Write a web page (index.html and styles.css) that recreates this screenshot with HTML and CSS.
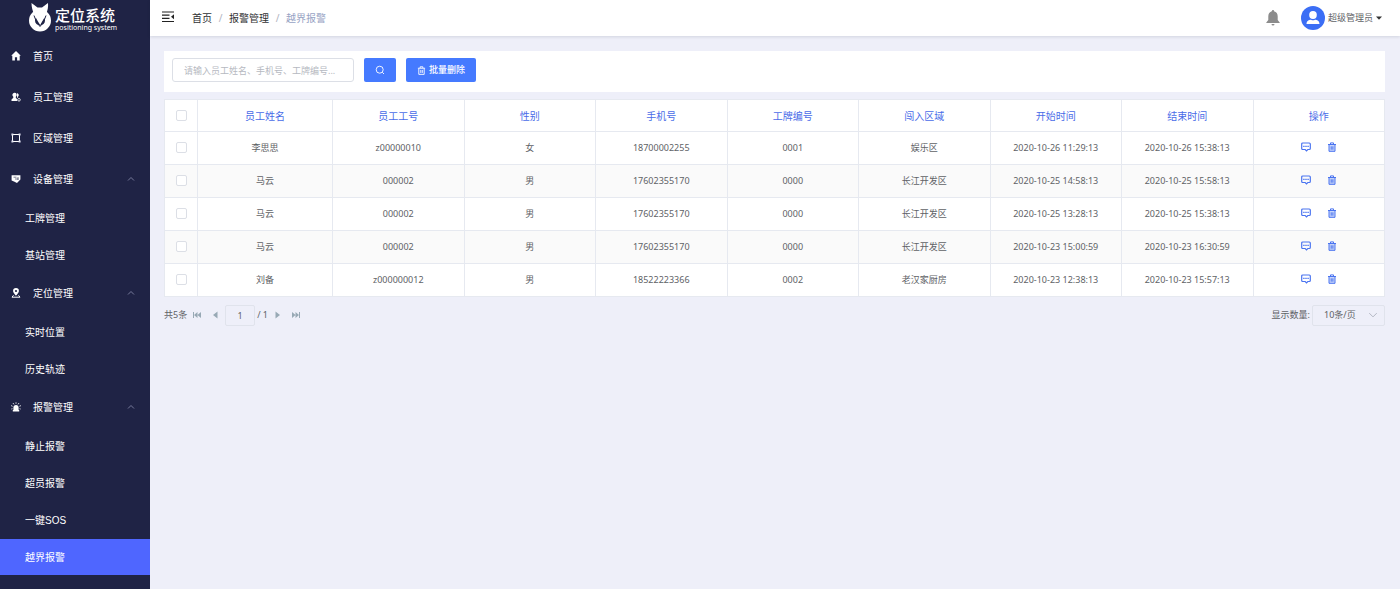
FILE: index.html
```html
<!DOCTYPE html>
<html lang="zh-CN">
<head>
<meta charset="utf-8">
<meta name="viewport" content="width=device-width, initial-scale=1">
<title>定位系统 - 越界报警</title>
<link rel="stylesheet" href="styles.css">
</head>
<body>
<svg class="sprite" aria-hidden="true">
  <symbol id="comment" viewBox="0 0 10 10"><path d="M1.700 1h6.600a1 1 0 0 1 1 1v4.500a1 1 0 0 1-1 1H6.800L5.500 8.900 4.200 7.500H1.700a1 1 0 0 1-1-1V2a1 1 0 0 1 1-1z" fill="none" stroke="currentColor" stroke-width="1.200"/><path d="M2.200 3.700h1.400V5H2.200zM4.300 3.700h1.400V5H4.300zM6.400 3.700h1.400V5H6.400z" fill="currentColor"/></symbol>
  <symbol id="trash" viewBox="0 0 10 10"><path d="M1 2.500h8M3.500 2.200V.9h3v1.300M2 2.800v6.500h6V2.800M4.200 4.300v3.400M5.900 4.300v3.400" fill="none" stroke="currentColor"/></symbol>
  <symbol id="trash-filled" viewBox="0 0 10 10"><path d="M2 2.800h6v6.500H2z" fill="currentColor" opacity=".3"/><path d="M1 2.500h8M3.500 2.200V.9h3v1.300M2 2.800v6.500h6V2.800M4.200 4.300v3.400M5.900 4.300v3.400" fill="none" stroke="currentColor"/></symbol>
  <symbol id="chevron" viewBox="0 0 8 8"><path d="M1 5.500 4 2.500 7 5.500" fill="none" stroke="currentColor" stroke-width=".8"/></symbol>
</svg>
<div class="app">
  <aside class="sidebar">
    <a class="brand" href="#">
      <svg class="brand-mark" viewBox="0 0 24 30" aria-hidden="true"><circle cx="12" cy="17.500" r="8" fill="none" stroke="#fff" stroke-width="6"/><path d="M3.500 0 9.500 4.500h4.500L20 0c.8 8-3 14-7.800 22C7.500 14.500 3.500 8 3.500 0z" fill="#fff"/><path d="M6 12.500c1.500 4.500 3.500 8 6 11 2.500-3 4.500-6.500 6-11" fill="none" stroke="#1f2345" stroke-width="1"/></svg>
      <span class="brand-text"><strong class="brand-name">定位系统</strong><span class="brand-sub">positioning system</span></span>
    </a>
    <nav>
      <ul class="menu">
        <li><a class="menu-item" href="#"><svg class="menu-icon" viewBox="0 0 10 10"><path d="M5 0 9.800 4.800H8.700V9.500H6.100V6.300H3.900v3.200H1.300V4.800H.2z" fill="#fff"/></svg>首页</a></li>
        <li><a class="menu-item" href="#"><svg class="menu-icon" viewBox="0 0 10 10"><path d="M3.500.8a2 2.200 0 0 1 1.300 4v1l1.400 1.400V9H.5V7.500L2.300 5.800v-1A2.200 2.200 0 0 1 3.500.8zM5.800 1.200c2 0 2.500 2.300 1.200 3.600v.8L6.200 6z" fill="#fff"/><circle cx="8" cy="7.800" r="1.300" fill="none" stroke="#fff" stroke-width=".8"/></svg>员工管理</a></li>
        <li><a class="menu-item" href="#"><svg class="menu-icon" viewBox="0 0 10 10"><path d="M1.500 1.500h7v7h-7z" fill="none" stroke="#fff"/><path d="M.4.4h2v2h-2zM7.600.4h2v2h-2zM.4 7.600h2v2h-2zM7.600 7.600h2v2h-2z" fill="#dfe2f0"/></svg>区域管理</a></li>
        <li>
          <button class="menu-item" type="button" aria-expanded="true"><svg class="menu-icon" viewBox="0 0 10 10"><path d="M.6 1.200h8.800v4.300L6 9 3 7.600.6 6.600z" fill="#fff"/><path d="M2.500 3.200h3M4 5h3.500M7 3v3" stroke="#1f2345" stroke-width=".6"/></svg>设备管理<svg class="menu-arrow"><use href="#chevron"/></svg></button>
          <ul class="submenu"><li><a class="sub-item" href="#">工牌管理</a></li><li><a class="sub-item" href="#">基站管理</a></li></ul>
        </li>
        <li>
          <button class="menu-item" type="button" aria-expanded="true"><svg class="menu-icon" viewBox="0 0 10 10"><path d="M5 0a2.900 2.900 0 0 1 2.900 3.100C7.900 5 5 7.700 5 7.700S2.100 5 2.100 3.100A2.900 2.900 0 0 1 5 0zm0 1.900a1.100 1.100 0 1 0 0 2.200 1.100 1.100 0 0 0 0-2.200z" fill="#fff" fill-rule="evenodd"/><path d="M2.500 7.300 1 9.200h8L7.500 7.300" fill="none" stroke="#fff"/></svg>定位管理<svg class="menu-arrow"><use href="#chevron"/></svg></button>
          <ul class="submenu"><li><a class="sub-item" href="#">实时位置</a></li><li><a class="sub-item" href="#">历史轨迹</a></li></ul>
        </li>
        <li>
          <button class="menu-item" type="button" aria-expanded="true"><svg class="menu-icon" viewBox="0 0 10 10"><path d="M2.400 8V5.500a2.600 2.600 0 0 1 5.200 0V8h.6v1.600H1.800V8z" fill="#fff"/><path d="M5 .3v1.500M2 1l.9 1.400M8 1l-.9 1.400M0 3.600l1.600.7M10 3.600l-1.600.7M.3 7l1.200-.3M9.700 7l-1.200-.3" stroke="#fff" stroke-width=".8"/></svg>报警管理<svg class="menu-arrow"><use href="#chevron"/></svg></button>
          <ul class="submenu"><li><a class="sub-item" href="#">静止报警</a></li><li><a class="sub-item" href="#">超员报警</a></li><li><a class="sub-item" href="#">一键SOS</a></li><li><a class="sub-item active" href="#" aria-current="page">越界报警</a></li></ul>
        </li>
      </ul>
    </nav>
  </aside>
  <div class="page">
    <header class="topbar">
      <button class="fold" type="button" aria-label="收起菜单"><svg viewBox="0 0 12 12"><path d="M0 1h12M0 4.200h7.500M0 7.400h7.500M0 10.500h12" stroke="#222" stroke-width="1.200"/><path d="M12 3.200v5L9 5.700z" fill="#222"/></svg></button>
      <nav class="crumbs" aria-label="路径"><a href="#">首页</a><i>/</i><a href="#">报警管理</a><i>/</i><span>越界报警</span></nav>
      <button class="bell" type="button" aria-label="通知"><svg viewBox="0 0 14 16"><path d="M7 0a1 1 0 0 1 1 1.200c2.500.5 3.700 2.500 3.700 5V10l2 2.500v.5H.3v-.5l2-2.500V6.200c0-2.500 1.200-4.500 3.700-5A1 1 0 0 1 7 0zM5.500 14h3a1.500 1.500 0 0 1-3 0z" fill="#8c8c8c"/></svg></button>
      <button class="user" type="button"><svg class="avatar" viewBox="0 0 24 24"><circle cx="12" cy="12" r="12" fill="#3b6ef5"/><ellipse cx="12" cy="9" rx="3.800" ry="4" fill="#fff"/><path d="M5.500 18c0-3 2.500-4.300 4.500-4.300q2 1.200 4 0c2 0 4.500 1.300 4.500 4.300z" fill="#fff"/></svg>超级管理员<svg class="caret" viewBox="0 0 6 4"><path d="M0 .5h6L3 3.700z" fill="#333"/></svg></button>
    </header>
    <main class="content">
      <form class="toolbar">
        <input class="search" type="text" aria-label="搜索" placeholder="请输入员工姓名、手机号、工牌编号...">
        <button class="btn btn-icon" type="button" aria-label="查询"><svg viewBox="0 0 10 10"><circle cx="4.700" cy="4.700" r="3.500" fill="none" stroke="#fff" stroke-width=".9"/><path d="M7.300 7.300 9 9" stroke="#fff" stroke-width=".9"/></svg></button>
        <button class="btn" type="button"><svg class="btn-trash"><use href="#trash"/></svg>批量删除</button>
      </form>
      <table class="grid">
        <colgroup><col class="col-check"><col class="col-name"><col span="8"></colgroup>
        <thead><tr><th><input type="checkbox" aria-label="全选"></th><th>员工姓名</th><th>员工工号</th><th>性别</th><th>手机号</th><th>工牌编号</th><th>闯入区域</th><th>开始时间</th><th>结束时间</th><th>操作</th></tr></thead>
        <tbody>
          <tr><td><input type="checkbox" aria-label="选择"></td><td>李思思</td><td>z00000010</td><td>女</td><td>18700002255</td><td>0001</td><td>娱乐区</td><td>2020-10-26 11:29:13</td><td>2020-10-26 15:38:13</td><td><div class="ops"><button type="button" aria-label="详情"><svg><use href="#comment"/></svg></button><button type="button" aria-label="删除"><svg><use href="#trash-filled"/></svg></button></div></td></tr>
          <tr><td><input type="checkbox" aria-label="选择"></td><td>马云</td><td>000002</td><td>男</td><td>17602355170</td><td>0000</td><td>长江开发区</td><td>2020-10-25 14:58:13</td><td>2020-10-25 15:58:13</td><td><div class="ops"><button type="button" aria-label="详情"><svg><use href="#comment"/></svg></button><button type="button" aria-label="删除"><svg><use href="#trash-filled"/></svg></button></div></td></tr>
          <tr><td><input type="checkbox" aria-label="选择"></td><td>马云</td><td>000002</td><td>男</td><td>17602355170</td><td>0000</td><td>长江开发区</td><td>2020-10-25 13:28:13</td><td>2020-10-25 15:38:13</td><td><div class="ops"><button type="button" aria-label="详情"><svg><use href="#comment"/></svg></button><button type="button" aria-label="删除"><svg><use href="#trash-filled"/></svg></button></div></td></tr>
          <tr><td><input type="checkbox" aria-label="选择"></td><td>马云</td><td>000002</td><td>男</td><td>17602355170</td><td>0000</td><td>长江开发区</td><td>2020-10-23 15:00:59</td><td>2020-10-23 16:30:59</td><td><div class="ops"><button type="button" aria-label="详情"><svg><use href="#comment"/></svg></button><button type="button" aria-label="删除"><svg><use href="#trash-filled"/></svg></button></div></td></tr>
          <tr><td><input type="checkbox" aria-label="选择"></td><td>刘备</td><td>z000000012</td><td>男</td><td>18522223366</td><td>0002</td><td>老汉家厨房</td><td>2020-10-23 12:38:13</td><td>2020-10-23 15:57:13</td><td><div class="ops"><button type="button" aria-label="详情"><svg><use href="#comment"/></svg></button><button type="button" aria-label="删除"><svg><use href="#trash-filled"/></svg></button></div></td></tr>
        </tbody>
      </table>
      <div class="pager">
        <span>共5条</span>
        <button type="button" aria-label="首页"><svg viewBox="0 0 8 8"><path d="M0 1h1v6H0zM4.500 1v6L1 4zM8 1v6L4.500 4z"/></svg></button>
        <button type="button" aria-label="上一页"><svg viewBox="0 0 8 8"><path d="M6.500.5v7L2 4z"/></svg></button>
        <input class="page-no" type="text" value="1" aria-label="页码">
        <span class="total">/ 1</span>
        <button type="button" aria-label="下一页"><svg viewBox="0 0 8 8"><path d="M1.500.5v7L6 4z"/></svg></button>
        <button type="button" aria-label="末页"><svg viewBox="0 0 8 8"><path d="M7 1h1v6H7zM3.500 1v6L7 4zM0 1v6L3.500 4z"/></svg></button>
        <label class="size-label" for="size">显示数量:</label>
        <span class="size"><select id="size"><option>10条/页</option><option>20条/页</option></select><svg><use href="#chevron"/></svg></span>
      </div>
    </main>
  </div>
</div>
</body>
</html>
```
FILE: styles.css
```css
* { box-sizing: border-box; }

body {
  margin: 0;
  font: 9px/16px "Noto Sans", "Noto Sans CJK SC", sans-serif;
  color: #606266;
  background: #eeeff9;
}

button, input, select { font: inherit; color: inherit; margin: 0; }
button { padding: 0; border: 0; background: none; cursor: pointer; }
a { color: inherit; text-decoration: none; }
ul { margin: 0; padding: 0; list-style: none; }
svg { display: block; width: 10px; height: 10px; flex: none; }
.sprite { position: absolute; width: 0; height: 0; }

.app { display: flex; min-height: 100vh; }

.sidebar {
  flex: none;
  width: 150px;
  background: #1f2345;
  color: #fff;
  font: 10px/16px "Liberation Sans", "Noto Sans CJK SC", sans-serif;
}
.brand { display: flex; gap: 3px; height: 36px; padding: 3px 0 0 28px; }
.brand-mark { width: 24px; height: 30px; }
.brand-text { display: flex; flex-direction: column; padding-top: 3px; }
.brand-name { font: 500 15px/18px "Noto Sans CJK SC", sans-serif; }
.brand-sub { font: 7px/8px "Noto Sans", sans-serif; white-space: nowrap; }

.menu-item {
  display: flex;
  align-items: center;
  width: 100%;
  height: 41px;
  padding: 1px 15px 0 11px;
  text-align: left;
}
.menu-icon { margin: 0 12px 2px 0; }
.menu-arrow { width: 8px; height: 8px; margin: 0 0 2px auto; color: #8b8fae; }
.submenu { display: grid; gap: 1px; }
.sub-item { display: flex; align-items: center; height: 36px; padding: 2px 0 0 25px; }
.active { background: #4f66ff; }

.page { flex: 1; min-width: 0; }
.topbar {
  display: flex;
  align-items: center;
  height: 36px;
  padding: 0 18px 0 12px;
  background: #fff;
  box-shadow: 0 1px 3px rgba(0, 21, 41, .12);
}
.fold { padding-bottom: 2px; }
.fold svg { width: 12px; height: 12px; }
.crumbs { display: flex; margin-left: 18px; font-size: 10px; color: #303133; }
.crumbs i { width: 17px; text-align: center; font-style: normal; color: #b0b4c0; }
.crumbs span { color: #97a3c4; }
.bell { margin-left: auto; }
.bell svg { width: 14px; height: 16px; }
.user { display: flex; align-items: center; margin-left: 21px; }
.avatar { width: 24px; height: 24px; margin-right: 3px; }
.caret { width: 6px; height: 4px; margin-left: 3px; }

.content { padding: 15px 15px 0 14px; }
.toolbar {
  display: flex;
  align-items: center;
  gap: 10px;
  height: 41px;
  padding: 0 8px 3px;
  background: #fff;
}
.search {
  width: 182px;
  height: 24px;
  padding: 0 11px;
  border: 1px solid #dcdfe6;
  border-radius: 3px;
  background: #fff;
}
.search::placeholder { color: #b6b9c1; opacity: 1; }
.btn {
  display: flex;
  align-items: center;
  justify-content: center;
  gap: 3px;
  height: 24px;
  padding: 0 11px;
  border-radius: 2px;
  background: #457aff;
  color: #fff;
  font-weight: 500;
}
.btn-trash { width: 9px; height: 9px; }

.grid {
  width: 100%;
  margin-top: 7px;
  table-layout: fixed;
  border-collapse: collapse;
  background: #fff;
}
.col-check { width: 33px; }
.col-name { width: 135px; }
.grid th, .grid td { height: 33px; padding: 0 0 1px; border: 1px solid #e6e9f0; text-align: center; }
.grid th { height: 32px; padding: 0; font-size: 10px; font-weight: 400; color: #4a6ce8; }
.grid tbody tr:nth-child(even) { background: #fafafa; }
.grid input {
  display: block;
  appearance: none;
  width: 11px;
  height: 11px;
  margin: 0 auto;
  border: 1px solid #dcdfe6;
  border-radius: 2px;
  background: #fff;
}
.ops { display: flex; justify-content: center; gap: 16px; padding-bottom: 2px; color: #4a74f0; }

.pager { display: flex; align-items: center; height: 22px; margin-top: 7px; }
.pager button { margin-left: 10px; }
.pager span + button { margin-left: 6px; }
.pager button svg { width: 8px; height: 8px; fill: #98a9b5; }
.page-no {
  width: 30px;
  height: 21px;
  margin: 0 2px 0 6px;
  padding: 0;
  border: 1px solid #e0e3ec;
  border-radius: 2px;
  background: transparent;
  text-align: center;
}
.size-label { margin-left: auto; }
.size { display: flex; align-items: center; width: 73px; height: 21px; margin-left: 2px; border: 1px solid #e0e3ec; border-radius: 2px; }
.size select { flex: 1; min-width: 0; height: 100%; padding: 0 11px; border: 0; appearance: none; background: transparent; }
.size svg { width: 10px; height: 10px; margin-right: 6px; transform: rotate(180deg); color: #b4b8c4; }
```
